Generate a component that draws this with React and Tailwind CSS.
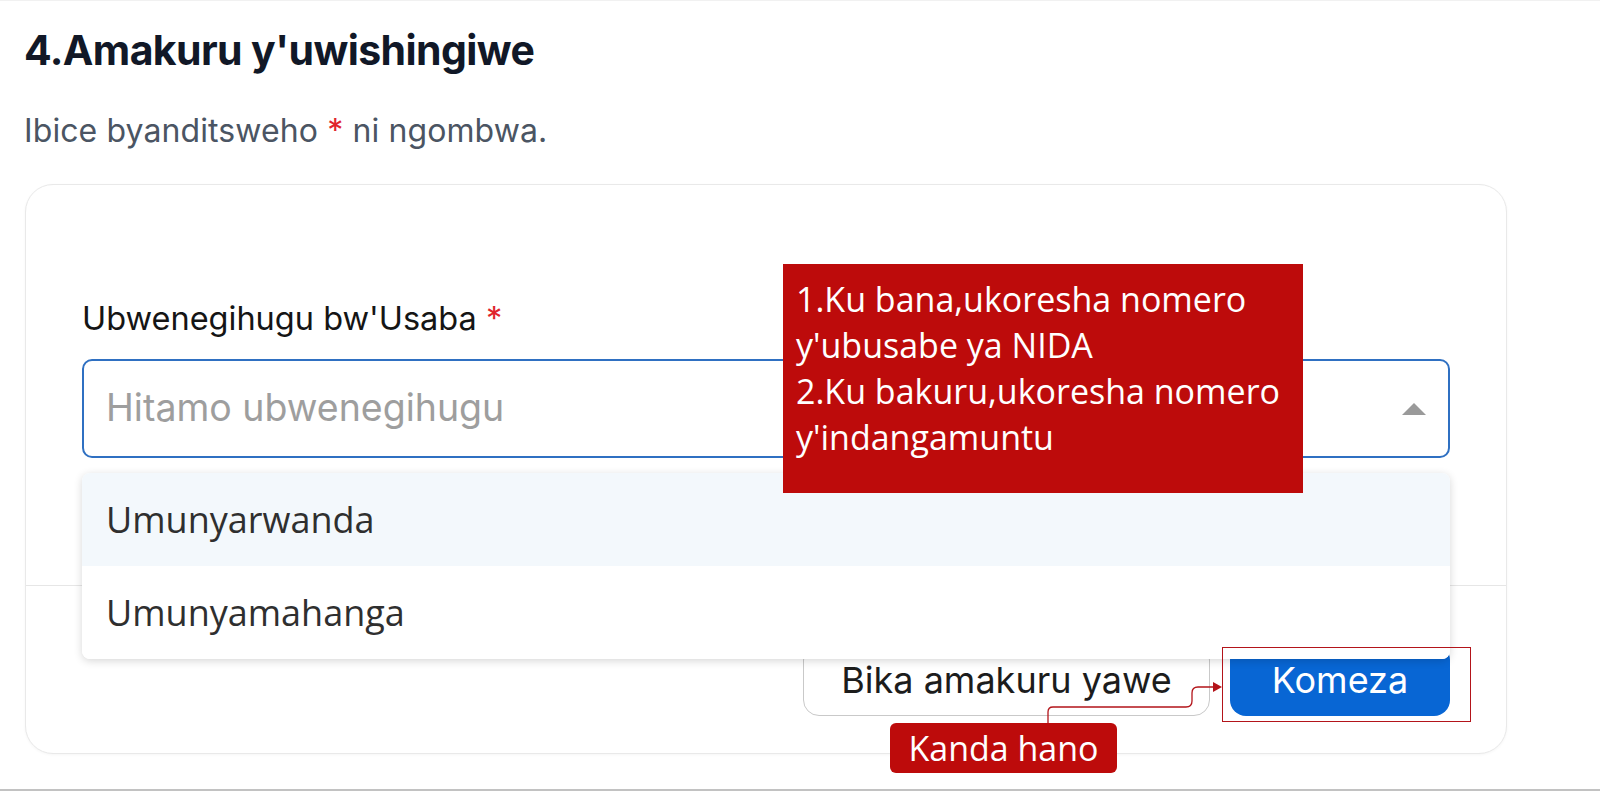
import { useState } from 'react';

const options = ['Umunyarwanda', 'Umunyamahanga'];

export default function App() {
  const [hovered, setHovered] = useState(0);

  return (
    <div className="relative h-[791px] w-[1600px] overflow-hidden bg-white border-t border-[#f1f1f1] border-b-2 border-b-[#c2c2c2] font-[family-name:Inter,sans-serif]">
      <div className="pl-6 pt-[25px]">
        <h1 className="text-[41px] leading-[48px] font-bold text-[#111827] tracking-[-0.6px]">4.Amakuru y'uwishingiwe</h1>
        <p className="mt-[37px] text-[32px] leading-[40px] text-[#4b5563] tracking-[0.1px]">
          Ibice byanditsweho <span className="text-[#e0242c]">*</span> ni ngombwa.
        </p>
      </div>

      <div className="ml-[25px] mt-[33px] w-[1482px] h-[570px] rounded-[28px] border border-[#e9e9e9] bg-white shadow-[0_1px_3px_rgba(0,0,0,0.04)]">
        <div className="h-[400px] px-[56px] pt-[114px]">
          <label className="block text-[32.5px] leading-[40px] text-[#151515]">
            Ubwenegihugu bw'Usaba <span className="text-[#e0242c]">*</span>
          </label>
          <div className="relative mt-5">
            <div className="flex h-[99px] items-center justify-between rounded-[10px] border-2 border-[#2f70c2] pl-[22px] pr-[22px]">
              <span className="text-[37.5px] text-[#9e9e9e]">Hitamo ubwenegihugu</span>
              <svg width="24" height="12" viewBox="0 0 24 12">
                <polygon points="12,0 24,12 0,12" fill="#9a9a9a" />
              </svg>
            </div>

            <div className="absolute left-0 right-0 top-[114px] z-10 overflow-hidden rounded-[8px] bg-white shadow-[0_2px_8px_rgba(0,0,0,0.16)] font-[family-name:'Open_Sans',sans-serif]">
              {options.map((opt, i) => (
                <div
                  key={opt}
                  onMouseEnter={() => setHovered(i)}
                  className={`flex h-[93px] items-center pl-6 text-[36px] text-[#2f2f2f] ${hovered === i ? 'bg-[#f3f8fc]' : 'bg-white'}`}
                >
                  {opt}
                </div>
              ))}
            </div>
          </div>
        </div>

        <div className="border-t border-[#e6e6e6]" />

        <div className="flex justify-end gap-5 pr-[56px] pt-[58px]">
          <button className="h-[72px] w-[407px] rounded-[16px] border border-[#c9c9c9] bg-white text-[36px] text-[#1c1c1c]">
            Bika amakuru yawe
          </button>
          <button className="h-[72px] w-[220px] rounded-[16px] bg-[#0866d4] text-[36px] text-white">
            Komeza
          </button>
        </div>
      </div>

      {/* annotations */}
      <div className="absolute left-[783px] top-[263px] z-20 h-[229px] w-[520px] bg-[#bd0b0b] pl-[13px] pt-[12px] font-[family-name:'Open_Sans',sans-serif] text-[34px] leading-[46px] text-white">
        <div>1.Ku bana,ukoresha nomero</div>
        <div>y'ubusabe ya NIDA</div>
        <div>2.Ku bakuru,ukoresha nomero</div>
        <div>y'indangamuntu</div>
      </div>

      <div className="absolute left-[1222px] top-[646px] z-20 h-[75px] w-[249px] border-[1.5px] border-[#b3141a]" />

      <svg className="absolute left-[1040px] top-[677px] z-20" width="190" height="50" viewBox="1040 677 190 50">
        <path d="M1048 723 V711 Q1048 706 1053 706 H1186 Q1192 706 1192 700 V692 Q1192 686 1198 686 H1214" fill="none" stroke="#b3141a" strokeWidth="1.3" />
        <polygon points="1213,681 1222,686 1213,691" fill="#b3141a" />
      </svg>

      <div className="absolute left-[890px] top-[722px] z-20 flex h-[50px] w-[227px] items-center justify-center rounded-[6px] bg-[#bd0b0b] font-[family-name:'Open_Sans',sans-serif] text-[34px] text-white">
        Kanda hano
      </div>
    </div>
  );
}
